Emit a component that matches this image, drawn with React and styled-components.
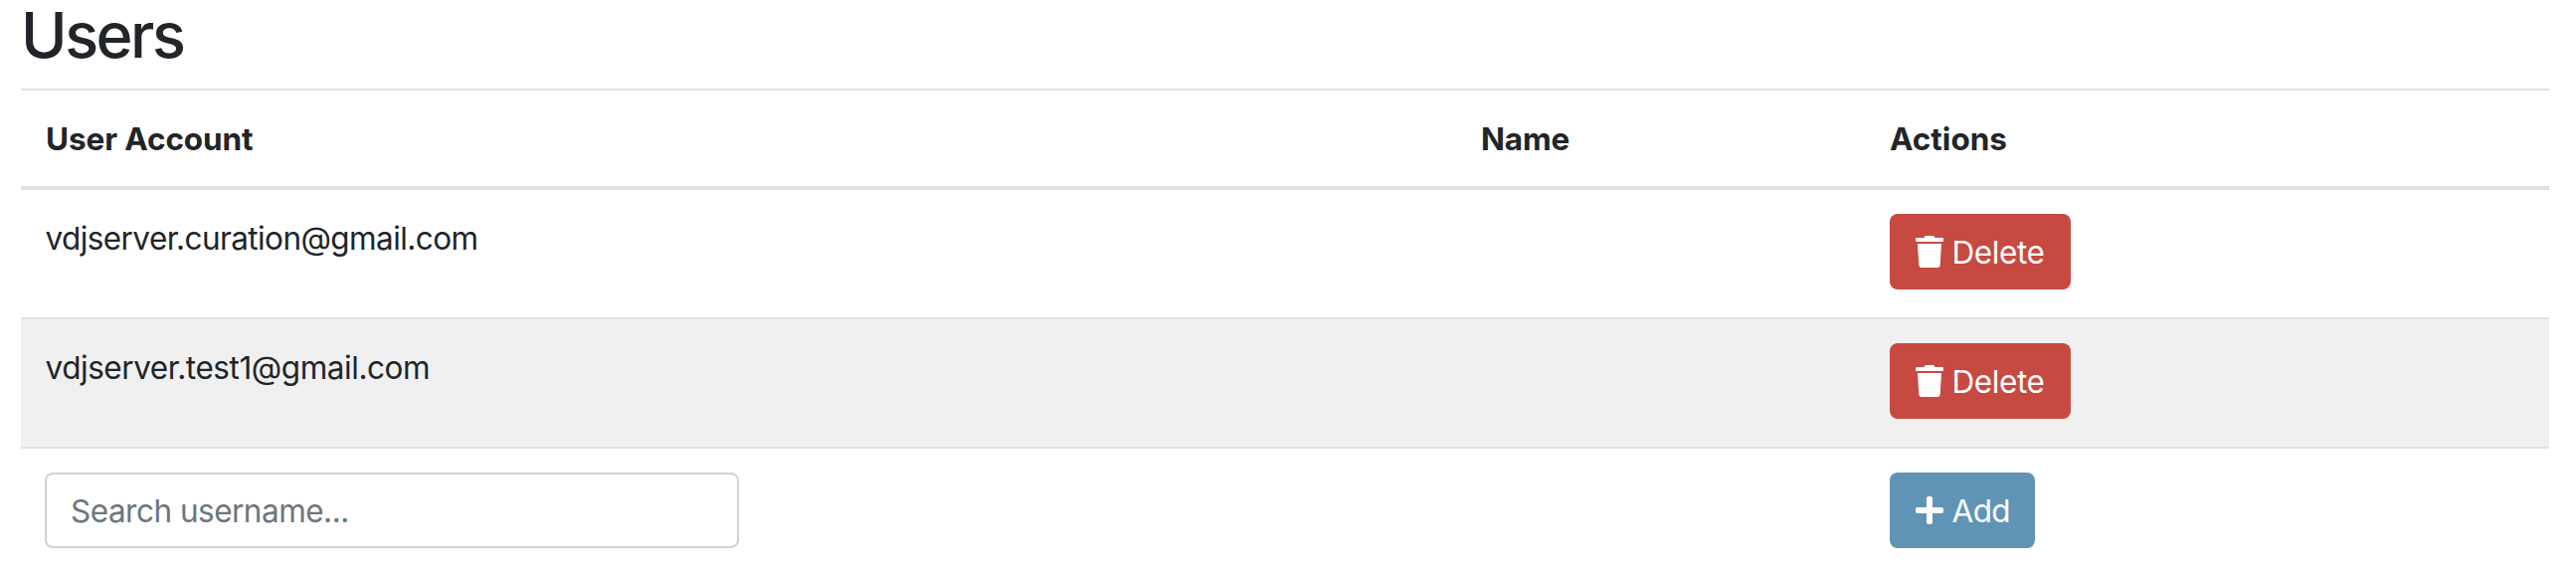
import React from "react";
import styled, { createGlobalStyle } from "styled-components";

const Global = createGlobalStyle`
  *, *::before, *::after { box-sizing: border-box; }
  body {
    margin: 0;
    background: #fff;
    color: #212529;
    font: 430 31.5px/50px Inter, "Liberation Sans", sans-serif;
  }
`;

const Page = styled.main`
  height: 576px;
  padding: 0 27px 0 21px;
`;

const Title = styled.h1`
  margin: 0;
  height: 89px;
  font-size: 63px;
  font-weight: 550;
  line-height: 71px;
  letter-spacing: -2.5px;
`;

const Row = styled.div`
  display: grid;
  grid-template-columns: 1443px 412px 1fr;
  height: ${(p) => (p.$header ? 102 : 130)}px;
  border-top: ${(p) => (p.$first ? 0 : 2)}px solid #dee2e6;
  border-bottom: ${(p) => (p.$header ? 4 : 0)}px solid #dee2e6;
  background: ${(p) => (p.$striped ? "#f0f0f0" : "transparent")};
  ${(p) => p.$first && "height: 128px;"}
`;

const Cell = styled.div`
  padding: 24px;
  white-space: nowrap;
`;

const HeadCell = styled(Cell)`
  padding-left: ${(p) => p.$inset || 24}px;
  font-weight: 700;
`;

const Text = styled.span`
  letter-spacing: ${(p) => p.$spacing || 0}px;
`;

const Account = styled(Text)`
  padding-left: 0.5px;
`;

const Button = styled.button`
  display: flex;
  align-items: center;
  gap: 8.5px;
  width: ${(p) => p.$width}px;
  height: 76px;
  padding: 0 26px;
  border: 0;
  border-radius: 8px;
  background: ${(p) => p.$color};
  color: #fff;
  font: inherit;
  line-height: 48px;

  ${Text} { padding-top: 1px; }
`;

const Icon = styled.svg`
  flex: none;
  width: 28px;
  height: 32px;
  fill: currentColor;
`;

const Search = styled.input`
  display: block;
  width: 698px;
  height: 76px;
  padding: 1px 24px 0;
  border: 2px solid #ced4da;
  border-radius: 8px;
  background: #fff;
  color: #495057;
  font: inherit;
  letter-spacing: -0.5px;
  &::placeholder { color: #6c757d; opacity: 1; }
`;

const TrashIcon = () => (
  <Icon viewBox="0 0 448 512">
    <path d="M432 32H312l-9.4-18.7A24 24 0 0 0 281.1 0H166.8a23.72 23.72 0 0 0-21.4 13.3L136 32H16A16 16 0 0 0 0 48v32a16 16 0 0 0 16 16h416a16 16 0 0 0 16-16V48a16 16 0 0 0-16-16zM53.2 467a48 48 0 0 0 47.9 45h245.8a48 48 0 0 0 47.9-45L416 128H32z" />
  </Icon>
);

const PlusIcon = () => (
  <Icon viewBox="0 0 448 512">
    <path d="M416 208H272V64c0-17.67-14.33-32-32-32h-32c-17.67 0-32 14.33-32 32v144H32c-17.67 0-32 14.33-32 32v32c0 17.67 14.33 32 32 32h144v144c0 17.67 14.33 32 32 32h32c17.67 0 32-14.33 32-32V304h144c17.67 0 32-14.33 32-32v-32c0-17.67-14.33-32-32-32z" />
  </Icon>
);

const users = [
  { account: "vdjserver.curation@gmail.com", spacing: -0.58 },
  { account: "vdjserver.test1@gmail.com", spacing: -0.44 },
];

export default function App() {
  return (
    <Page>
      <Global />
      <Title>Users</Title>
      <Row $header>
        <HeadCell $inset={25}><Text $spacing={-0.1}>User Account</Text></HeadCell>
        <HeadCell $inset={25}><Text $spacing={-0.2}>Name</Text></HeadCell>
        <HeadCell><Text>Actions</Text></HeadCell>
      </Row>
      {users.map((user, i) => (
        <Row key={user.account} $first={i === 0} $striped={i % 2 === 1}>
          <Cell><Account $spacing={user.spacing}>{user.account}</Account></Cell>
          <Cell />
          <Cell>
            <Button $width={182} $color="#c74a42">
              <TrashIcon />
              <Text $spacing={-0.4}>Delete</Text>
            </Button>
          </Cell>
        </Row>
      ))}
      <Row>
        <Cell><Search placeholder="Search username..." /></Cell>
        <Cell />
        <Cell>
          <Button $width={146} $color="#6094b5">
            <PlusIcon />
            <Text $spacing={-0.6}>Add</Text>
          </Button>
        </Cell>
      </Row>
    </Page>
  );
}
